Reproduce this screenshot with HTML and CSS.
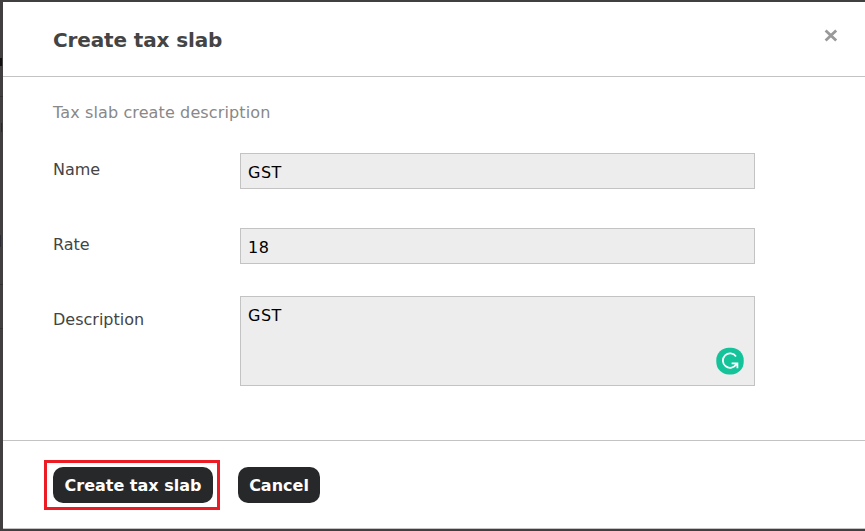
FILE: index.html
```html
<!DOCTYPE html>
<html lang="en">
<head>
<meta charset="utf-8">
<title>Create tax slab</title>
<link rel="stylesheet" href="styles.css">
</head>
<body>
<form class="modal">
  <header class="modal-header">
    <h1 class="title">Create tax slab</h1>
    <button class="close" type="button" aria-label="Close">
      <svg width="14" height="14" viewBox="0 0 14 14"><path d="M1.6 1.4 12.2 11.4M12.2 1.4 1.6 11.4"/></svg>
    </button>
  </header>
  <main class="modal-body">
    <p class="intro">Tax slab create description</p>
    <div class="row">
      <label class="label" for="name">Name</label>
      <input class="field" id="name" value="GST">
    </div>
    <div class="row">
      <label class="label" for="rate">Rate</label>
      <input class="field" id="rate" value="18">
    </div>
    <div class="row row-description">
      <label class="label label-description" for="description">Description</label>
      <div class="area">
        <textarea class="field field-area" id="description" spellcheck="false">GST</textarea>
        <svg class="checker" width="28" height="28" viewBox="0 0 28 28">
          <rect x=".3" y=".7" width="27.4" height="26.8" rx="12.5" fill="#15c39a"/>
          <path d="M20 9.5A7.2 7.2 0 1 0 20.4 17M15.6 16.4H21.4V21.2" fill="none" stroke="#fff" stroke-width="1.8"/>
        </svg>
      </div>
    </div>
  </main>
  <footer class="modal-footer">
    <div class="highlight"><button class="button button-create" type="button">Create tax slab</button></div>
    <button class="button button-cancel" type="button">Cancel</button>
  </footer>
</form>
</body>
</html>
```
FILE: styles.css
```css
* { box-sizing: border-box; }
body {
  height: 531px;
  margin: 0;
  padding: 2px 0 2px 3px;
  overflow: hidden;
  /* dimmed page edge behind the dialog */
  background:
    linear-gradient(#111, #111) 0 58px / 2px 8px no-repeat,
    linear-gradient(#333, #333) 0 96px / 3px 1px no-repeat,
    linear-gradient(#2c2a28, #2c2a28) 1px 123px / 1px 9px no-repeat,
    linear-gradient(#2d2d35, #2d2d35) 0 235px / 1px 12px no-repeat,
    linear-gradient(#333, #333) 0 284px / 3px 1px no-repeat,
    linear-gradient(#333, #333) 0 328px / 3px 1px no-repeat,
    #413f40;
  color: #444;
  font: 16px/20px Verdana, "DejaVu Sans", sans-serif;
}
.modal {
  display: flex;
  flex-direction: column;
  height: 527px;
  background: #fff;
  border-bottom: 1px solid #c3c3c3;
}
.modal-header {
  display: flex;
  align-items: flex-start;
  justify-content: space-between;
  height: 75px;
  padding: 26px 27px 0 50px;
  border-bottom: 1px solid #c3c3c3;
}
.title { margin: 0; font-size: 20px; line-height: 24px; letter-spacing: -.13px; }
.close { width: 14px; height: 14px; margin-top: 1px; padding: 0; border: 0; background: none; }
.close svg { display: block; fill: none; stroke: #999; stroke-width: 2.8; }
.modal-body { flex: 1; padding: 26px 110px 0 50px; }
.intro { margin: 0 0 30px; color: #888; letter-spacing: .12px; }
.row { display: flex; height: 75px; }
.row-description { height: 90px; margin-top: -7px; }
.label { width: 187px; padding-top: 7px; }
.label-description { padding-top: 14px; }
.field {
  display: block;
  width: 515px;
  height: 36px;
  margin: 0;
  padding: 3px 7px 0;
  border: 1px solid #c3c3c3;
  border-radius: 0;
  outline: 0;
  background: #ededed;
  color: #000;
  font: inherit;
  letter-spacing: .5px;
}
.area { position: relative; }
.field-area { height: 90px; padding-top: 9px; resize: none; }
.checker { position: absolute; right: 11px; bottom: 11px; }
.modal-footer {
  display: flex;
  align-items: flex-start;
  gap: 18px;
  height: 88px;
  padding: 19px 0 0 41px;
  border-top: 1px solid #c3c3c3;
}
.highlight { padding: 4px; border: 3px solid #ed1c24; padding-left: 6px; }
.button {
  height: 36px;
  padding: 1px 0 0;
  border: 0;
  border-radius: 10px;
  background: #27282a;
  color: #fff;
  font: bold 16px/35px Verdana, "DejaVu Sans", sans-serif;
}
.button-create { display: block; width: 160px; }
.button-cancel { width: 82px; margin-top: 7px; }
```
